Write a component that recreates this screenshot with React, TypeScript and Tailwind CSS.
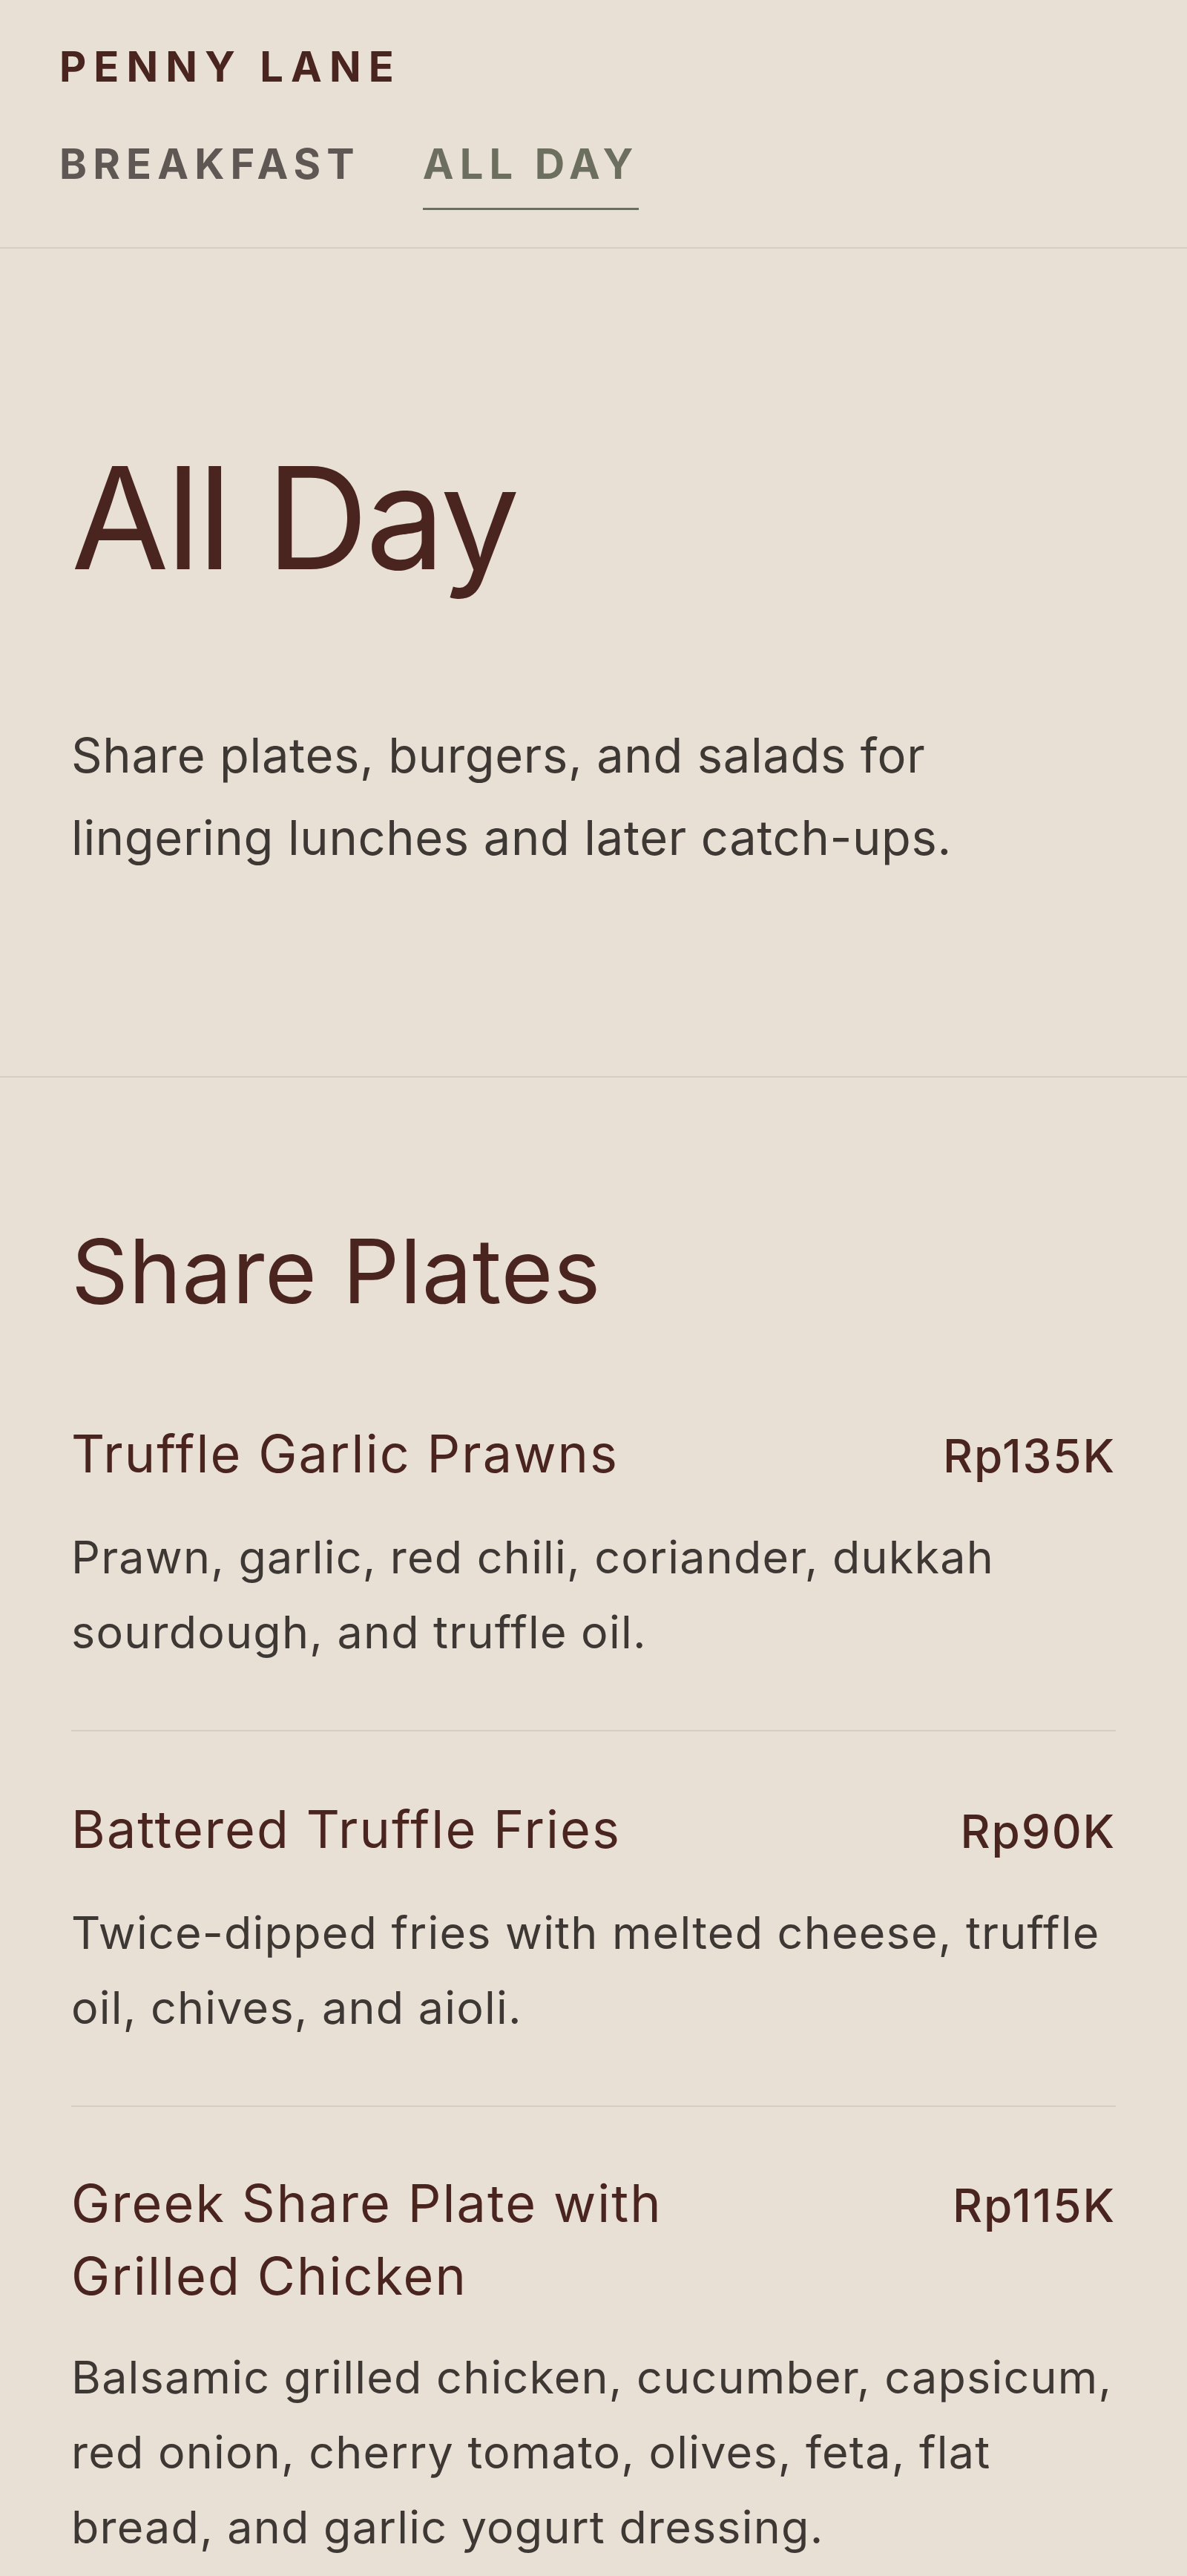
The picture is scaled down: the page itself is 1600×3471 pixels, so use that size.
import React from "react";

type Item = { name: string; price: string; desc: string };

const items: Item[] = [
  {
    name: "Truffle Garlic Prawns",
    price: "Rp135K",
    desc: "Prawn, garlic, red chili, coriander, dukkah sourdough, and truffle oil.",
  },
  {
    name: "Battered Truffle Fries",
    price: "Rp90K",
    desc: "Twice-dipped fries with melted cheese, truffle oil, chives, and aioli.",
  },
  {
    name: "Greek Share Plate with Grilled Chicken",
    price: "Rp115K",
    desc: "Balsamic grilled chicken, cucumber, capsicum, red onion, cherry tomato, olives, feta, flat bread, and garlic yogurt dressing.",
  },
];

export default function App() {
  return (
    <div className="min-h-screen bg-[#e8dfd5] font-['Inter',sans-serif] text-[#4a2520]">
      <header className="border-b-2 border-[#d6cec5] px-20 pt-[62px] pb-[50px]">
        <div className="text-[56px] font-bold leading-none tracking-[0.18em] text-[#4a2520]">
          PENNY LANE
        </div>
        <nav className="mt-[75px] flex gap-[84px]">
          <a className="pb-[31px] text-[56px] font-bold leading-none tracking-[0.145em] text-[#5e5753]">
            BREAKFAST
          </a>
          <a className="border-b-[3px] border-[#6c6f5d] pb-[31px] text-[56px] font-bold leading-none tracking-[0.145em] text-[#6c6f5d]">
            ALL DAY
          </a>
        </nav>
      </header>

      <section className="border-b-2 border-[#d6cec5] px-24 pt-[267px] pb-[266px]">
        <h1 className="text-[191px] font-normal leading-none tracking-[-0.02em] text-[#4a2520]">
          All Day
        </h1>
        <p className="mt-[169px] max-w-[1260px] text-[65px] leading-[111px] tracking-[0.01em] text-[#3e3834]">
          Share plates, burgers, and salads for lingering lunches and later catch-ups.
        </p>
      </section>

      <section className="px-24 pt-[201px] pb-[21px]">
        <h2 className="text-[120px] font-normal leading-none tracking-[0.005em] text-[#4a2520]">
          Share Plates
        </h2>
        <div className="mt-[54px] flex flex-col">
          {items.map((it, i) => (
            <div
              key={it.name}
              className={
                i < items.length - 1
                  ? "border-b-2 border-[#d6cec5] pt-[83px] pb-[81px]"
                  : "pt-[81px]"
              }
            >
              <div className="flex items-baseline justify-between gap-8">
                <h3 className="max-w-[1000px] text-[70px] font-normal leading-[98px] tracking-[0.03em] text-[#4a2520]">
                  {it.name}
                </h3>
                <span className="shrink-0 text-[62px] font-medium leading-[98px] tracking-[0.03em] text-[#4a2520]">
                  {it.price}
                </span>
              </div>
              <p className="mt-[37px] text-[61px] leading-[101px] tracking-[0.02em] text-[#3e3834]">
                {it.desc}
              </p>
            </div>
          ))}
        </div>
      </section>
    </div>
  );
}
